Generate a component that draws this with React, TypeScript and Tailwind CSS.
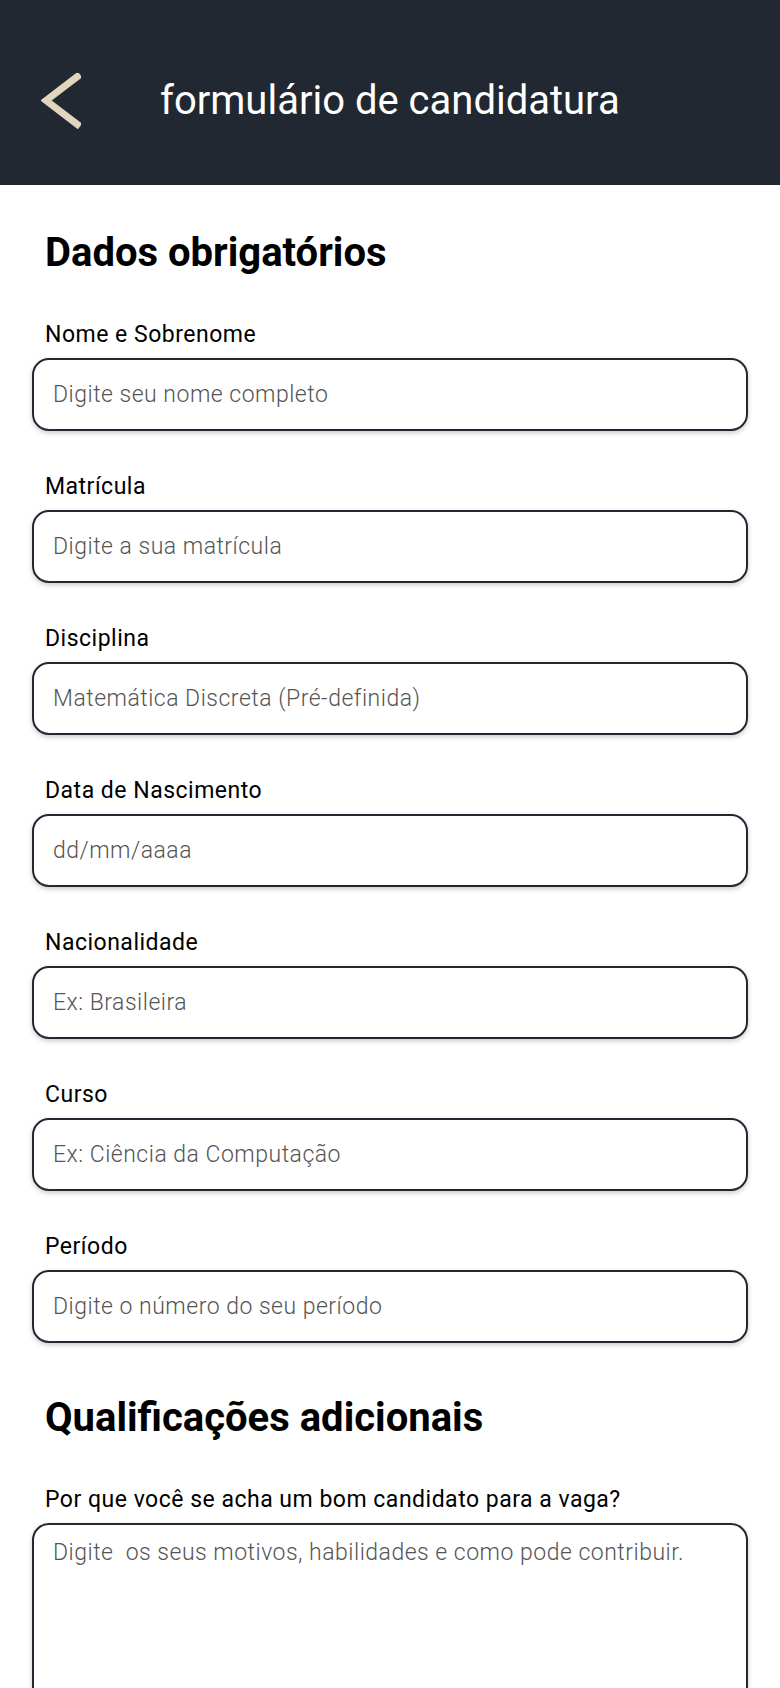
import React from "react";

const fields = [
  { label: "Nome e Sobrenome", placeholder: "Digite seu nome completo" },
  { label: "Matrícula", placeholder: "Digite a sua matrícula" },
  { label: "Disciplina", placeholder: "Matemática Discreta (Pré-definida)" },
  { label: "Data de Nascimento", placeholder: "dd/mm/aaaa" },
  { label: "Nacionalidade", placeholder: "Ex: Brasileira" },
  { label: "Curso", placeholder: "Ex: Ciência da Computação" },
  { label: "Período", placeholder: "Digite o número do seu período" },
];

const boxClass =
  "w-full rounded-[17px] border-2 border-[#222831] bg-white px-[19px] text-[23px] font-light tracking-[0.5px] text-[#222] shadow-[0_2px_5px_rgba(0,0,0,0.22)] outline-none placeholder:text-[#555]";

const labelClass = "mb-[10px] block pl-[13px] text-[23px] leading-[26px] tracking-[0.5px]";

export default function App() {
  return (
    <div className="min-h-screen bg-white font-['Roboto','Liberation_Sans',sans-serif] text-black">
      <header className="flex h-[185px] items-center bg-[#222831] pt-[16px]">
        <button type="button" className="ml-[41px] flex h-[56px] w-[40px] items-center" aria-label="Voltar">
          <svg width="40" height="56" viewBox="0 0 40 56" fill="none">
            <path d="M39 1.5 L5 27.5 L39 53.5" stroke="#e2d5bd" strokeWidth="7" strokeLinejoin="miter" />
          </svg>
        </button>
        <h1 className="ml-[79px] text-[40px] font-normal leading-[46px] text-white">formulário de candidatura</h1>
      </header>

      <main className="px-[32px] pb-10">
        <h2 className="mt-[45px] pl-[13px] text-[40px] font-bold leading-[46px]">Dados obrigatórios</h2>

        <div className="mt-[46px] flex flex-col gap-[43px]">
          {fields.map((field) => (
            <label key={field.label} className="block">
              <span className={labelClass}>{field.label}</span>
              <input className={`${boxClass} h-[73px]`} placeholder={field.placeholder} />
            </label>
          ))}
        </div>

        <h2 className="mt-[52px] pl-[13px] text-[40px] font-bold leading-[46px]">Qualificações adicionais</h2>

        <label className="mt-[46px] block">
          <span className={labelClass}>Por que você se acha um bom candidato para a vaga?</span>
          <textarea
            className={`${boxClass} block h-[240px] resize-none pt-[15px] leading-[26px]`}
            placeholder="Digite  os seus motivos, habilidades e como pode contribuir."
          />
        </label>
      </main>
    </div>
  );
}
